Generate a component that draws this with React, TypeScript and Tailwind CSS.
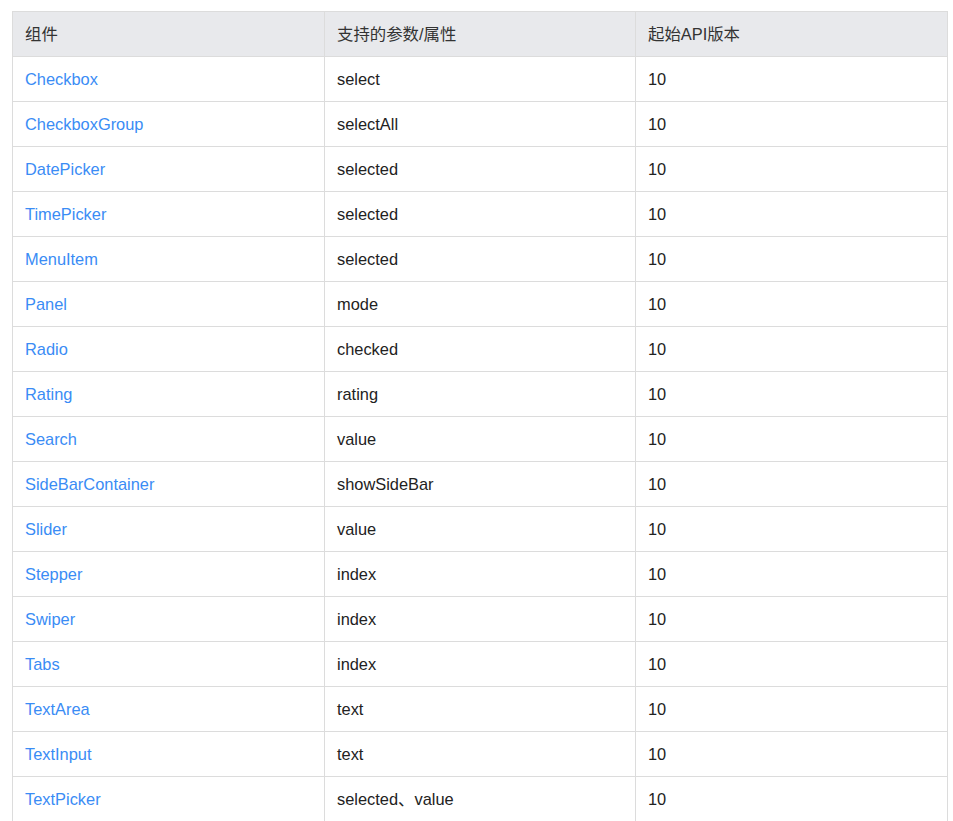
import React from "react";

const rows: [string, string][] = [
  ["Checkbox", "select"],
  ["CheckboxGroup", "selectAll"],
  ["DatePicker", "selected"],
  ["TimePicker", "selected"],
  ["MenuItem", "selected"],
  ["Panel", "mode"],
  ["Radio", "checked"],
  ["Rating", "rating"],
  ["Search", "value"],
  ["SideBarContainer", "showSideBar"],
  ["Slider", "value"],
  ["Stepper", "index"],
  ["Swiper", "index"],
  ["Tabs", "index"],
  ["TextArea", "text"],
  ["TextInput", "text"],
  ["TextPicker", "selected、value"],
];

export default function App() {
  return (
    <div
      className="bg-white w-[953px] h-[821px] overflow-hidden pt-[11px] pl-[12px]"
      style={{ fontFamily: '"Liberation Sans", "Noto Sans CJK SC", sans-serif' }}
    >
      <table className="w-[935px] border-collapse table-fixed text-[16.4px] leading-[20px] text-[#222]">
        <colgroup>
          <col className="w-[312px]" />
          <col className="w-[311px]" />
          <col className="w-[312px]" />
        </colgroup>
        <thead>
          <tr className="bg-[#e8e9ec]">
            <th className="border border-[#dcdcdc] px-3 py-3 text-left font-normal text-[#333]">组件</th>
            <th className="border border-[#dcdcdc] px-3 py-3 text-left font-normal text-[#333]">支持的参数/属性</th>
            <th className="border border-[#dcdcdc] px-3 py-3 text-left font-normal text-[#333]">起始API版本</th>
          </tr>
        </thead>
        <tbody>
          {rows.map(([a, b]) => (
            <tr key={a}>
              <td className="border border-[#dcdcdc] px-3 py-3 text-[#3a8cf5]">{a}</td>
              <td className="border border-[#dcdcdc] px-3 py-3">{b}</td>
              <td className="border border-[#dcdcdc] px-3 py-3">10</td>
            </tr>
          ))}
        </tbody>
      </table>
    </div>
  );
}
